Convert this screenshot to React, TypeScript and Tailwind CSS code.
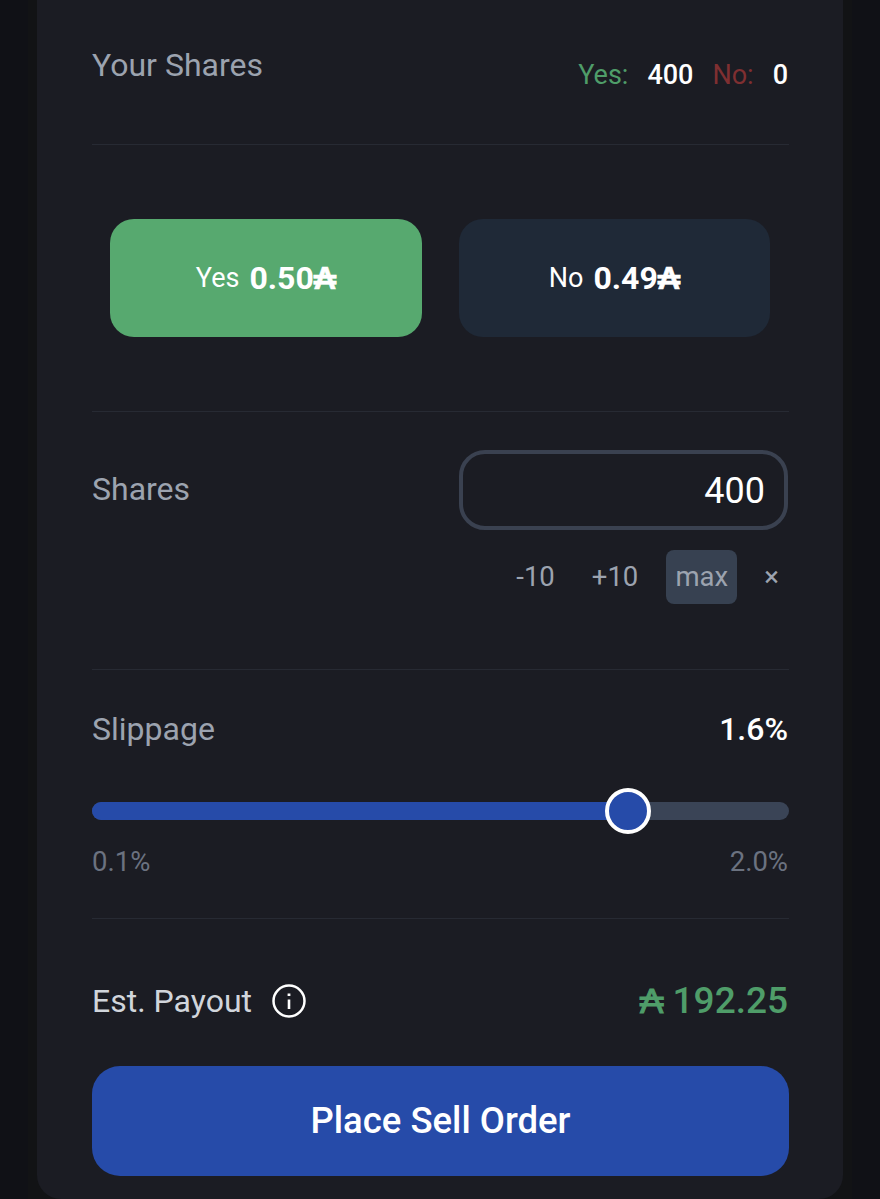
export default function App() {
  return (
    <div className="h-[1199px] overflow-hidden bg-[#101116] pl-[28px] pr-[28px] font-['Roboto',sans-serif]">
      <div className="h-[1199px] bg-[#121315] px-[9px]">
        <div className="h-[1199px] rounded-b-[24px] bg-[#1b1c23] px-[55px]">
          {/* Your shares */}
          <div className="flex h-[145px] w-[697px] items-start justify-between border-b border-[#272a33] pr-px">
            <span className="mt-[45px] text-[32px] leading-[40px] text-[#9ca3af]">Your Shares</span>
            <div className="mt-[59px] flex text-[27px] leading-[32px]">
              <span className="text-[#4f9d69]">Yes:</span>
              <span className="ml-[19px] font-medium text-white">400</span>
              <span className="ml-[19px] text-[#7f2f31]">No:</span>
              <span className="ml-[19px] font-medium text-white">0</span>
            </div>
          </div>

          {/* Outcome buttons */}
          <div className="flex h-[267px] w-[697px] items-start gap-[37px] border-b border-[#272a33] pl-[18px] pt-[74px]">
            <button className="flex h-[118px] w-[312px] items-center justify-center gap-[10px] rounded-[24px] bg-[#57a96f] text-white">
              <span className="text-[27px]">Yes</span>
              <span className="text-[32px] font-bold">0.50<span className="text-[31px] [-webkit-text-stroke:0.7px_white]">₳</span></span>
            </button>
            <button className="flex h-[118px] w-[311px] items-center justify-center gap-[10px] rounded-[24px] bg-[#1f2937] text-white">
              <span className="text-[27px]">No</span>
              <span className="text-[32px] font-bold">0.49<span className="text-[31px] [-webkit-text-stroke:0.7px_white]">₳</span></span>
            </button>
          </div>

          {/* Shares */}
          <div className="h-[258px] w-[697px] border-b border-[#272a33] pr-px pt-[38px]">
            <div className="flex items-center justify-between">
              <span className="mt-[-2px] text-[32px] text-[#9ca3af]">Shares</span>
              <div className="flex h-[80px] w-[329px] items-center justify-end rounded-[26px] border-[4px] border-[#3a4150] px-[19px] pt-[2px] text-[36px] text-white">
                400
              </div>
            </div>
            <div className="mt-[20px] flex items-center justify-end text-[27.5px] text-[#9ca3af]">
              <span className="mr-[37px]">-10</span>
              <span className="mr-[28px]">+10</span>
              <span className="flex h-[54px] w-[71px] items-center justify-center rounded-[8px] bg-[#374151]">max</span>
              <span className="ml-[27px] mr-[9px]">×</span>
            </div>
          </div>

          {/* Slippage */}
          <div className="h-[249px] w-[697px] border-b border-[#272a33] pt-[39px]">
            <div className="flex items-center justify-between pr-px">
              <span className="text-[32px] leading-[40px] text-[#9ca3af]">Slippage</span>
              <span className="text-[32px] font-medium leading-[40px] text-white">1.6%</span>
            </div>
            <div className="relative mt-[53px] h-[18px] rounded-full bg-[#3a4456]">
              <div className="h-[18px] w-[536px] rounded-l-full bg-[#264ba9]" />
              <div className="absolute left-[513px] top-[-14px] h-[46px] w-[46px] rounded-full border-[4px] border-white bg-[#264ba9]" />
            </div>
            <div className="mt-[25px] flex justify-between pr-px text-[27.5px] leading-[34px] text-[#6b7280]">
              <span>0.1%</span>
              <span>2.0%</span>
            </div>
          </div>

          {/* Payout */}
          <div className="flex h-[147px] w-[697px] items-start justify-between pr-px pt-[60px]">
            <div className="flex items-center">
              <span className="text-[32px] leading-[44px] text-[#d1d5db]">Est. Payout</span>
              <svg className="ml-[20px]" width="34" height="34" viewBox="0 0 34 34" fill="none" stroke="#ffffff">
                <circle cx="17" cy="17" r="15.5" strokeWidth="2.5" />
                <path d="M17 15.5V25" strokeWidth="2.6" />
                <path d="M17 9.5V12" strokeWidth="2.8" />
              </svg>
            </div>
            <span className="text-[37px] font-medium leading-[44px] text-[#4f9d69]">
              <span className="text-[35px] [-webkit-text-stroke:1px_#4f9d69]">₳</span> 192.25
            </span>
          </div>

          {/* Submit */}
          <button className="h-[110px] w-[697px] rounded-[28px] bg-[#264ba9] text-[36.5px] font-medium text-white">
            Place Sell Order
          </button>
        </div>
      </div>
    </div>
  );
}
